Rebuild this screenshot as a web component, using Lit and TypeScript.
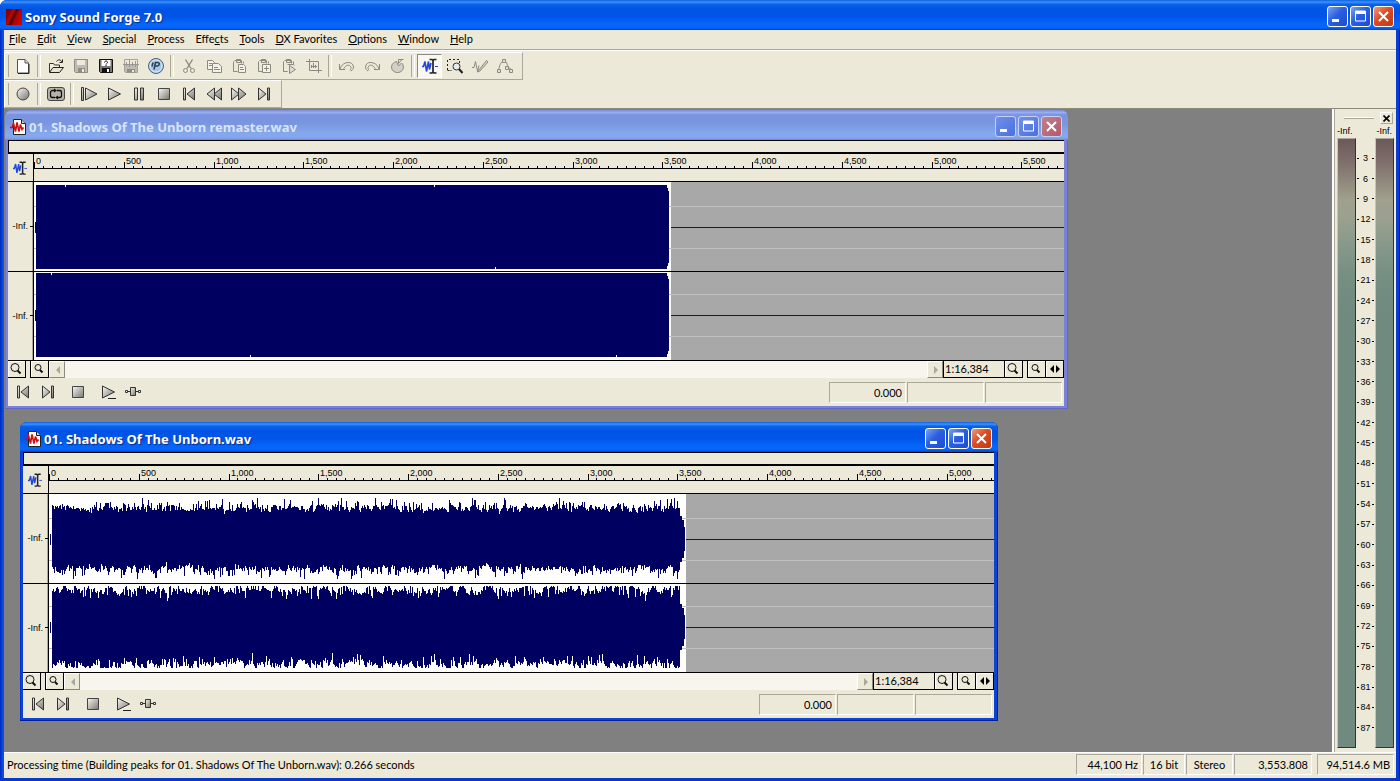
import { LitElement, html, svg, css } from "lit";
import { customElement, property } from "lit/decorators.js";
import { classMap } from "lit/directives/class-map.js";

const grey = (on: any) => svg`<g stroke="#8c8a80" fill="none" stroke-width="1">${on}</g>`;
const clip = svg`<path d="M3.500 2.500h7v3M2.500 3.500v10h4M12.500 3.500v2M5.500 1.500h4v3h-4z"/>`;

const icons: Record<string, any> = {
  new: svg`<path d="M3 1.500h7l3.500 3.500v10H2.500V1.500z" fill="#fff" stroke="#555"/><path d="M10 1.500V5h3.500" fill="#ddd" stroke="#555"/><path d="M3 15.500h11V6" fill="none" stroke="#222"/>`,
  open: svg`<path d="M1.500 14V5.500h4l1 1.500h5v2" fill="#f4f0dc" stroke="#333"/><path d="M1.500 14.500l3.500-5h10.500l-4 5z" fill="#e8e4cc" stroke="#222"/><path d="M8.500 3.500c2-2.500 4-2 5.500 .5M14.500 1.500v3h-3" fill="none" stroke="#222"/>`,
  save: svg`<path d="M1.500 1.500h13v13h-12l-1-1z" fill="#bdbbb4" stroke="#8f8d86"/><path d="M4 2h8v5H4z" fill="#eceadf"/><path d="M5 10h7v4.500H5z" fill="#8f8d86"/><path d="M9 11h2v3H9z" fill="#eceadf"/>`,
  saveAs: svg`<path d="M1.500 1.500h13v13h-12l-1-1z" fill="#777" stroke="#111"/><path d="M3.500 2h9v6h-9z" fill="#fff"/><path d="M6.500 4.500c0-2 3-2 3 0 0 1-1.500 1-1.500 2M8 7v1" fill="none" stroke="#111"/><path d="M4 10h8v4.500H4z" fill="#111"/><path d="M9 11h2v3H9z" fill="#fff"/>`,
  render: svg`<path d="M1.500 1.500h13v13h-12l-1-1z" fill="#bdbbb4" stroke="#a5a39b"/><path d="M2 2h12v5H2z" fill="#eceadf"/><path d="M0 6.500h16M3.500 4v4M6.500 2v7M9.500 4v4M12.500 3v6" stroke="#99978f" fill="none"/><path d="M4 11h8v3.500H4z" fill="#8f8d86"/><path d="M9 12h2v2H9z" fill="#eceadf"/>`,
  publish: svg`<circle cx="8" cy="8" r="7.500" fill="#a9c6e4" stroke="#4f6475"/><circle cx="8" cy="8" r="6" fill="none" stroke="#dcebf7"/><path d="M6 11.500l1.500-7h2.500c2 0 1.500 3.500-.5 3.500H7M4 8.500l1-4" fill="none" stroke="#27455f" stroke-width="1.600"/>`,
  cut: grey(svg`<path d="M4.500 1.500l5.500 9M11.500 1.500L6 10.500" stroke-width="1.400"/><circle cx="4.500" cy="12.500" r="2"/><circle cx="11.500" cy="12.500" r="2"/>`),
  copy: grey(svg`<path d="M1.500 2.500h5l2 2v7h-7z" fill="#f3f1e8"/><path d="M6.500 5.500h6l3 3v6h-9z" fill="#f3f1e8"/><path d="M3 5.500h3M3 7.500h3M8 9.500h4M8 11.500h6"/>`),
  paste: grey(svg`${clip}<path d="M7.500 6.500h5l2 2v6h-7z" fill="#f3f1e8"/><path d="M9 9.500h3M9 11.500h4"/>`),
  pasteMix: grey(svg`${clip}<path d="M6.500 6.500h8v8h-8z" fill="#f3f1e8"/><path d="M10.500 8v5M8 10.500h5"/>`),
  pasteNew: grey(svg`${clip}<path d="M2.500 13.500h4M12.500 5v2M6.500 6.500h6l1 1"/><path d="M8.500 7.500v8l6-4z" fill="#dedcd2"/>`),
  crop: grey(svg`<path d="M3.500 1v11.500H16M0 3.500h12.500V15"/><path d="M5.500 7v3M7.500 5v5M9.500 7v3M11 8.500H5"/>`),
  undo: grey(svg`<path d="M.500 6v5.500h5.500"/><path d="M1 11c2-7.500 13-9 13.500-2 0 2-1 3-2.500 4M4.500 11.500c1.500-4.500 6.500-6 7.500-2 0 1.500-.5 2-1 3"/>`),
  redo: grey(svg`<path d="M15.500 6v5.500H10"/><path d="M15 11c-2-7.500-13-9-13.500-2 0 2 1 3 2.500 4M11.500 11.500c-1.500-4.500-6.500-6-7.500-2 0 1.500 .5 2 1 3"/>`),
  repeat: grey(svg`<path d="M9.500 5.500v-4h5M9.500 5.500l3.500-4"/><path d="M12.500 5a6 5.500 0 1 1-8 0 6 6 0 0 1 3-1.500L9.500 8z" fill="#d2d0c7"/>`),
  editTool: svg`<path d="M0 8.500h1.500L3 3.500l1.500 10 2-10 1 8L9 5" fill="none" stroke="#2148d8" stroke-width="1.600"/><path d="M13 8.500h3" stroke="#2148d8"/><path d="M7.500 1.500h2.500L11 2.500l1-1h2.500M7.500 15h2.500l1-1 1 1h2.500M11 2v12" fill="none" stroke="#222" stroke-width="1.700"/>`,
  magnify: svg`<path d="M.500 12V1.500h12V5" fill="none" stroke="#222" stroke-dasharray="2 2"/><path d="M.500 12.500h4" stroke="#222" stroke-dasharray="2 1"/><circle cx="9.500" cy="8.500" r="3.500" fill="#e4eef2" stroke="#333"/><path d="M12 11l3.500 4" stroke="#222" stroke-width="2"/>`,
  pencil: grey(svg`<path d="M0 9.500h2l1.500-6 2 10 1.500-6"/><path d="M6.500 12.500l8-10 1.500 1.500-8 9-2.500 1z" fill="#d2d0c7"/>`),
  envelope: grey(svg`<path d="M1.500 12c1-4 2-8 5-9M8 3c3 2 2 7 6 8"/><path d="M.500 11.500h3v3h-3zM5.500 1.500h3v3h-3zM8.500 8.500h3v3h-3zM12.500 11.500h3v3h-3z" fill="#e4e2d6"/>`),
  record: svg`<circle cx="8" cy="8" r="6" fill="url(#m)" stroke="#444"/>`,
  loop: svg`<rect x="-.5" y="1.500" width="17" height="13" rx="2.500" fill="#b4b2a9" stroke="#444"/><path d="M6 4.500H4.500a2 2 0 0 0-2 2v3a2 2 0 0 0 2 2H7M10 11.500h1.500a2 2 0 0 0 2-2v-3a2 2 0 0 0-2-2H9" fill="none" stroke="#111" stroke-width="1.300"/><path d="M6 2.500v4l3-2zM10 9.500v4l-3-2z" fill="#111"/>`,
  playAll: svg`<path d="M.500 1.500h2v13h-2z" fill="url(#m)" stroke="#333"/><path d="M4.500 2v12L16 8z" fill="url(#m)" stroke="#333"/>`,
  play: svg`<path d="M2.500 2v12L14.500 8z" fill="url(#m)" stroke="#333"/>`,
  pause: svg`<path d="M3.500 2h3v12h-3zM9.500 2h3v12h-3z" fill="url(#m)" stroke="#333"/>`,
  stop: svg`<path d="M2.500 2.500h11v11h-11z" fill="url(#m)" stroke="#444"/>`,
  toStart: svg`<path d="M2.500 2h2v12h-2zM13.500 2v12L6 8z" fill="url(#m)" stroke="#333"/>`,
  rewind: svg`<path d="M8.500 2v12L1 8zM15.500 2v12L8 8z" fill="url(#m)" stroke="#333"/>`,
  forward: svg`<path d="M.500 2v12L8 8zM7.500 2v12L15 8z" fill="url(#m)" stroke="#333"/>`,
  toEnd: svg`<path d="M11.500 2h2v12h-2zM2.500 2v12L10 8z" fill="url(#m)" stroke="#333"/>`,
  playCursor: svg`<path d="M2.500 2v12L14.500 8z" fill="url(#m)" stroke="#333"/><path d="M8 14.500h8" stroke="#222"/>`,
  scrub: svg`<path d="M0 7.500h16" stroke="#333"/><path d="M.500 6.500h2v2h-2zM13.500 6.500h2v2h-2z" fill="#fff" stroke="#333"/><path d="M5.500 3.500h5v8h-5z" fill="url(#m)" stroke="#333"/>`,
  zoomIn: svg`<circle cx="6" cy="6.500" r="4" fill="none" stroke="#111"/><path d="M8.500 9.500l3 3" stroke="#111" stroke-width="2"/>`,
  zoomOut: svg`<circle cx="6" cy="6.500" r="3" fill="none" stroke="#111"/><path d="M8 9l2.500 2.500" stroke="#111" stroke-width="2"/>`,
  left: svg`<path d="M10 4v8L6 8z" fill="#aaa899"/>`,
  right: svg`<path d="M6 4v8l4-4z" fill="#aaa899"/>`,
  both: svg`<path d="M7 4v8L3 8zM9 4v8l4-4z" fill="#000"/>`,
  doc: svg`<path d="M3.500 .500h8l4 4v11h-12z" fill="#fff" stroke="#222"/><path d="M11.500 .500v4h4" fill="#ccc" stroke="#222"/><path d="M0 8.500h2l1.500-4 2 8L7 3.500l2 9 1.500-7 1.500 5 1.500-2" fill="none" stroke="#d01010" stroke-width="1.600"/>`,
};

const icon = (name: string) => html`<svg class="icon" viewBox="0 0 16 16" aria-hidden="true">
  <defs><linearGradient id="m" x1="0" y1="0" x2="1" y2="1"><stop offset="0" stop-color="#f8f8f5" /><stop offset="1" stop-color="#77756e" /></linearGradient></defs>
  ${icons[name]}
</svg>`;

const shared = css`
  * { box-sizing: border-box; }
  button { font: inherit; color: inherit; border: 0; padding: 0; margin: 0; background: none; }
  svg { display: block; }
  .icon { width: 16px; height: 16px; overflow: visible; }
  .titlebar { display: flex; align-items: center; height: 30px; color: #fff; font: bold 13px/16px "Noto Sans", sans-serif; text-shadow: 1px 1px 1px #0f2a80;
    background: linear-gradient(#0f5fe0 0, #3c93fb 7%, #0a62ea 14%, #0054e4 30%, #0055e8 55%, #0566fb 80%, #0564fb 93%, #0040c8 100%); }
  .caption { flex: 1; white-space: nowrap; overflow: hidden; margin: 0; font: inherit; }
  .controls { display: flex; gap: 2px; }
  .ctl { width: 21px; height: 21px; border: 1px solid #fff; border-radius: 3px; background: linear-gradient(135deg, #7ba2f2, #2a5fe0 45%, #1c4cd0); }
  .ctl svg { width: 19px; height: 19px; }
  .ctl.close { background: linear-gradient(135deg, #f09a80, #dd4a22 45%, #c23a12); }
`;

const controls = html`<div class="controls">
  <button class="ctl" aria-label="Minimize"><svg viewBox="0 0 19 19"><path d="M4 12h7v3H4z" fill="#fff" /></svg></button>
  <button class="ctl" aria-label="Maximize"><svg viewBox="0 0 19 19"><path d="M4.500 4h10v10h-10z" fill="none" stroke="#fff" /><path d="M4 4h11v3H4z" fill="#fff" /></svg></button>
  <button class="ctl close" aria-label="Close"><svg viewBox="0 0 19 19"><path d="M5 5l9 9M14 5l-9 9" stroke="#fff" stroke-width="2" /></svg></button>
</div>`;

function random(seed: number) {
  return () => {
    seed = (seed + 0x6d2b79f5) | 0;
    let t = Math.imul(seed ^ (seed >>> 15), 1 | seed);
    t = (t + Math.imul(t ^ (t >>> 7), 61 | t)) ^ t;
    return ((t ^ (t >>> 14)) >>> 0) / 4294967296;
  };
}

const PX_PER_SECOND = 89.75 / 500;
const LENGTH = 3553.808;
const MIDS = [45, 133];

/* One vertical bar for each pixel column of a channel. */
function peaks(kind: string, channel: number) {
  const rnd = random(channel * 977 + 5);
  const mid = MIDS[channel];
  let d = `M1 ${mid - 5}h1v11h-1z`;
  if (kind === "limited") {
    for (let x = 2; x < 635; x++) {
      const edge = x > 632 ? (x - 632) * 3 : 0;
      const top = mid - 42 + edge + (rnd() > 0.996 ? 2 : 0);
      const bottom = mid + 42 - edge - (rnd() > 0.995 ? 2 : 0);
      d += `M${x} ${top}h1V${bottom}h-1z`;
    }
    return d;
  }
  const walker = () => {
    let drift = 0;
    return () => {
      drift = drift * 0.5 + (rnd() - 0.5) * 6;
      const v = channel === 0
        ? 31 + drift + (rnd() > 0.7 ? rnd() * 9 : 0) - (rnd() > 0.85 ? rnd() * 3 : 0)
        : 38 + drift * 1.3 - (rnd() > 0.75 ? rnd() * 8 : 0);
      return Math.min(v, 41);
    };
  };
  const above = walker();
  const below = walker();
  for (let x = 3; x < 636; x++) {
    const fade = x > 634 ? 12 : x > 632 ? 19 : x > 630 ? 23 : 99;
    const up = Math.round(Math.min(above(), fade));
    const down = Math.round(Math.min(below() - (channel === 0 ? 1 : 0), fade));
    d += `M${x} ${mid - up}h1V${mid + down}h-1z`;
  }
  return d;
}

@customElement("sf-document")
class SfDocument extends LitElement {
  @property() name = "";
  @property() kind = "dynamic";
  @property({ type: Boolean }) active = false;

  static styles = [shared, css`
    :host { display: block; }
    .window { display: flex; flex-direction: column; height: 100%; padding: 0 4px 3px 3px; border-radius: 7px 7px 0 0; overflow: hidden; background: #0b44d4; box-shadow: inset -1px -1px #001ea0, inset 1px 0 #0831d9; }
    .titlebar { margin: 0 -4px 0 -3px; padding: 3px 6px 0 5px; gap: 3px; }
    .inactive { background: #7a82dc; box-shadow: inset -1px -1px #6068c0, inset 1px 0 #6d75cc; }
    .inactive .titlebar { color: #d8e4f8; text-shadow: none; background: linear-gradient(#7688d8, #98b0f0 8%, #7b93e0 16%, #7a96df 45%, #86a8ee 80%, #82a6ec 93%, #7484d8); }
    .inactive .ctl { border-color: #c4d2f4; background: linear-gradient(135deg, #7090ea, #4a70e0); }
    .inactive .close { background: linear-gradient(135deg, #c08090, #b45868); }
    .client { flex: 1; display: flex; flex-direction: column; background: #ece9d8; color: #000; }
    .overview { height: 14px; border: 1px solid #000; border-width: 1px 0 2px 1px; }
    .ruler { display: flex; height: 28px; border-bottom: 1px solid #000; }
    .gutter { width: 26px; flex: none; border-right: 1px solid #000; display: flex; }
    .ruler .gutter { align-items: center; justify-content: center; padding-right: 2px; }
    .ruler .icon { width: 14px; height: 14px; }
    .scale { flex: 1; min-width: 0; height: 27px; }
    .scale text { font: 9px "Liberation Sans", sans-serif; }
    .body { display: flex; height: 179px; border-bottom: 1px solid #000; }
    .body .gutter { flex-direction: column; box-shadow: inset -1px 0 #aca899; }
    .channel { flex: 1; display: flex; align-items: center; justify-content: flex-end; gap: 2px; font: 9px/10px "Liberation Sans", sans-serif; }
    .channel + .channel { border-top: 1px solid #000; }
    .channel::after { content: ""; width: 3px; height: 1px; background: #000; }
    .plot { flex: 1; min-width: 0; height: 178px; background: #a8a8a8; }
    .scroll { display: flex; height: 17px; }
    .zoom { width: 18px; display: grid; place-items: center; border: 1px solid #000; border-width: 0 1px 1px 0; box-shadow: inset 1px 1px #fff; }
    .gap { width: 5px; border-right: 1px solid #000; }
    .arrow { width: 16px; display: grid; place-items: center; border: 1px solid; border-color: #fff #8c8a80 #8c8a80 #fff; }
    .track { flex: 1; background: #f7f5ee; }
    .ratio { width: 62px; padding-left: 1px; border: 1px solid #000; border-width: 0 1px 1px 1px; line-height: 16px; }
    .transport { flex: 1; display: flex; align-items: center; padding: 0 2px 0 7px; }
    .tool { width: 25px; display: flex; }
    .wide { margin-right: 5px; }
    .fields { margin-left: auto; display: flex; gap: 1px; }
    .field { width: 77px; height: 21px; padding-right: 3px; border: 1px solid; border-color: #aca899 #fff #fff #aca899; text-align: right; line-height: 19px; }
  `];

  private scale() {
    const seconds = this.active ? 5250 : 5700;
    const marks = [];
    for (let s = 0; s <= seconds; s += 50) {
      const x = Math.round(s * PX_PER_SECOND);
      const major = s % 500 === 0;
      marks.push(svg`<path d="M${x} ${major ? 8 : 12}h1v${major ? 6 : 2}h-1z"></path>`);
      if (major) marks.push(svg`<text x=${x + 2} y="10">${s.toLocaleString("en-US")}</text>`);
    }
    return html`<svg class="scale" shape-rendering="crispEdges"><rect y="14" width="100%" height="1"></rect>${marks}</svg>`;
  }

  private plot() {
    return html`<svg class="plot" shape-rendering="crispEdges">
      <rect width=${Math.round(LENGTH * PX_PER_SECOND) - 1} height="178" fill="#fff"></rect>
      ${[24, 66, 112, 154].map((y) => svg`<rect y=${y} width="100%" height="1" fill="#c0c0c0"></rect>`)}
      ${MIDS.map((y) => svg`<rect x="637" y=${y} width="100%" height="1" fill="#0808b4"></rect>`)}
      <rect y="89" width="100%" height="1"></rect>
      ${MIDS.map((_, i) => svg`<path d=${peaks(this.kind, i)} fill="#000060"></path>`)}
    </svg>`;
  }

  render() {
    const tool = (name: string, label: string, wide = false) =>
      html`<button class=${classMap({ tool: true, wide })} aria-label=${label}>${icon(name)}</button>`;
    return html`<section class=${classMap({ window: true, inactive: !this.active })}>
      <header class="titlebar">${icon("doc")}<h2 class="caption">${this.name}</h2>${controls}</header>
      <div class="client">
        <div class="overview"></div>
        <div class="ruler"><div class="gutter">${icon("editTool")}</div>${this.scale()}</div>
        <div class="body">
          <div class="gutter"><div class="channel">-Inf.</div><div class="channel">-Inf.</div></div>
          ${this.plot()}
        </div>
        <div class="scroll">
          <button class="zoom" aria-label="Level zoom in">${icon("zoomIn")}</button><span class="gap"></span>
          <button class="zoom" aria-label="Level zoom out">${icon("zoomOut")}</button>
          <button class="arrow" aria-label="Scroll left">${icon("left")}</button>
          <div class="track"></div>
          <button class="arrow" aria-label="Scroll right">${icon("right")}</button>
          <div class="ratio">1:16,384</div>
          <button class="zoom" aria-label="Time zoom in">${icon("zoomIn")}</button><span class="gap"></span>
          <button class="zoom" aria-label="Time zoom out">${icon("zoomOut")}</button>
          <button class="zoom" aria-label="Zoom to selection">${icon("both")}</button>
        </div>
        <div class="transport">
          ${tool("toStart", "Go to start")}${tool("toEnd", "Go to end", true)}${tool("stop", "Stop", true)}${tool("playCursor", "Play")}${tool("scrub", "Scrub")}
          <div class="fields"><div class="field">0.000</div><div class="field"></div><div class="field"></div></div>
        </div>
      </div>
    </section>`;
  }
}

@customElement("sf-meter")
class SfMeter extends LitElement {
  static styles = [shared, css`
    :host { display: flex; flex-direction: column; width: 64px; padding: 2px 2px 4px 2px; background: #ece9d8; border-left: 2px solid #fff; box-shadow: inset 1px 0 #aca899; font: 9px/12px "Liberation Sans", sans-serif; }
    .head { display: flex; align-items: center; gap: 6px; height: 14px; padding: 0 1px 0 8px; }
    .grip { flex: 1; height: 2px; border-top: 1px solid #fff; border-bottom: 1px solid #aca899; }
    .x { width: 13px; height: 12px; display: grid; place-items: center; border: 1px solid; border-color: #fff #aca899 #aca899 #fff; }
    .x svg { width: 7px; height: 7px; }
    .peaks { display: flex; justify-content: space-between; height: 13px; padding: 0 2px 0 1px; }
    .bars { flex: 1; display: flex; padding-left: 1px; }
    .bar { width: 19px; border: 1px solid; border-color: #aca899 #333 #333 #c8c4b4; background: linear-gradient(#6c595b 0, #80706c 4%, #a0a08e 10%, #9ba08f 13%, #84988a 18%, #748e82 23%, #708a80 28%); }
    .scale { flex: 1; display: flex; flex-direction: column; padding: 10px 1px; }
    .mark { flex: 1; display: flex; align-items: center; justify-content: space-between; }
    .mark::before, .mark::after { content: ""; width: 2px; height: 1px; background: #000; }
  `];

  render() {
    return html`
      <div class="head"><span class="grip"></span><button class="x" aria-label="Close meters"><svg viewBox="0 0 7 7"><path d="M.500 .500l6 6M6.500 .500l-6 6" stroke="#000" stroke-width="1.600" /></svg></button></div>
      <div class="peaks"><span>-Inf.</span><span>-Inf.</span></div>
      <div class="bars">
        <div class="bar"></div>
        <div class="scale">${Array.from({ length: 29 }, (_, i) => html`<div class="mark">${(i + 1) * 3}</div>`)}</div>
        <div class="bar"></div>
      </div>`;
  }
}

@customElement("app-root")
class AppRoot extends LitElement {
  static styles = [shared, css`
    :host { display: block; background: #fff; font: 11px/14px Lato, sans-serif; color: #000; }
    .app { display: flex; flex-direction: column; min-height: 100vh; padding: 0 4px; border-radius: 7px 7px 0 0; overflow: hidden; background: linear-gradient(90deg, #0028b8, #0a50e8 3px, #0a50e8 4px, transparent 4px), #0a3cd0; border-bottom: 3px solid #0838c8; box-shadow: inset -1px 0 #001e96; }
    .titlebar { margin: 0 -4px; padding: 3px 6px 0 6px; gap: 3px; }
    .logo { width: 16px; height: 16px; background: linear-gradient(115deg, #8c0000 20%, #b80808 35%, #500 48%, #a80404 60%, #c00 80%); }
    .menu { display: flex; height: 19px; align-items: center; padding: 0 5px 2px; gap: 11px; background: #ece9d8; }
    .menu button { line-height: 14px; }
    .menu u { text-underline-offset: 1px; }
    .bars { background: #ece9d8; border-top: 1px solid #aca899; box-shadow: inset 0 1px #fff; padding-top: 2px; border-bottom: 1px solid #8c8a7c; }
    .bar { display: flex; width: fit-content; height: 28px; align-items: center; padding: 0 5px 0 2px; border: 1px solid; border-color: #fff #aca899 #aca899 #fff; }
    .bar::before { content: ""; width: 1px; height: 22px; margin: 0 1px; background: #aca899; }
    .tool { width: 25px; height: 24px; display: grid; place-items: center; }
    .on { background: #f8f7f2; border: 1px solid; border-color: #8c8a80 #fff #fff #8c8a80; }
    .sep { width: 8px; height: 22px; display: flex; justify-content: center; }
    .sep::before { content: ""; width: 2px; border-left: 1px solid #aca899; border-right: 1px solid #fff; }
    .main { flex: 1; display: flex; min-height: 0; }
    .workspace { flex: 1; position: relative; overflow: hidden; background: #808080; }
    .first { position: absolute; left: 1px; top: 1px; width: 1063px; height: 299px; }
    .second { position: absolute; left: 16px; top: 313px; width: 978px; height: 299px; }
    .status { display: flex; align-items: center; height: 26px; padding: 0 2px 2px 3px; background: #ece9d8; border-top: 1px solid #fff; gap: 1px; }
    .message { flex: 1; margin: 0; }
    .cell { height: 21px; line-height: 19px; padding: 0 3px; text-align: right; white-space: nowrap; border: 1px solid; border-color: #aca899 #fff #fff #aca899; }
    .rate { width: 66px; } .bits { width: 42px; } .mode { width: 47px; } .length { width: 78px; margin-right: 4px; } .space { width: 77px; }
    .bits, .mode { text-align: center; }
  `];

  render() {
    const menus: [string, string, string][] = [["", "F", "ile"], ["", "E", "dit"], ["", "V", "iew"], ["", "S", "pecial"], ["", "P", "rocess"], ["Effe", "c", "ts"], ["", "T", "ools"], ["", "D", "X Favorites"], ["", "O", "ptions"], ["", "W", "indow"], ["", "H", "elp"]];
    const bar = (names: string[]) => html`<div class="bar" role="toolbar">
      ${names.map((n) => n === "|" ? html`<span class="sep"></span>`
        : html`<button class=${classMap({ tool: true, on: n === "editTool" })} aria-label=${n}>${icon(n)}</button>`)}
    </div>`;
    return html`<main class="app">
      <header class="titlebar"><span class="logo"></span><h1 class="caption">Sony Sound Forge 7.0</h1>${controls}</header>
      <nav class="menu">${menus.map(([a, k, b]) => html`<button>${a}<u>${k}</u>${b}</button>`)}</nav>
      <div class="bars">
        ${bar(["new", "|", "open", "save", "saveAs", "render", "publish", "|", "cut", "copy", "paste", "pasteMix", "pasteNew", "crop", "|", "undo", "redo", "repeat", "|", "editTool", "magnify", "pencil", "envelope"])}
        ${bar(["record", "|", "loop", "|", "playAll", "play", "pause", "stop", "toStart", "rewind", "forward", "toEnd"])}
      </div>
      <div class="main">
        <div class="workspace">
          <sf-document class="first" name="01. Shadows Of The Unborn remaster.wav" kind="limited"></sf-document>
          <sf-document class="second" name="01. Shadows Of The Unborn.wav" kind="dynamic" active></sf-document>
        </div>
        <sf-meter></sf-meter>
      </div>
      <footer class="status">
        <p class="message">Processing time (Building peaks for 01. Shadows Of The Unborn.wav): 0.266 seconds</p>
        <div class="cell rate">44,100 Hz</div><div class="cell bits">16 bit</div><div class="cell mode">Stereo</div>
        <div class="cell length">3,553.808</div><div class="cell space">94,514.6 MB</div>
      </footer>
    </main>`;
  }
}
